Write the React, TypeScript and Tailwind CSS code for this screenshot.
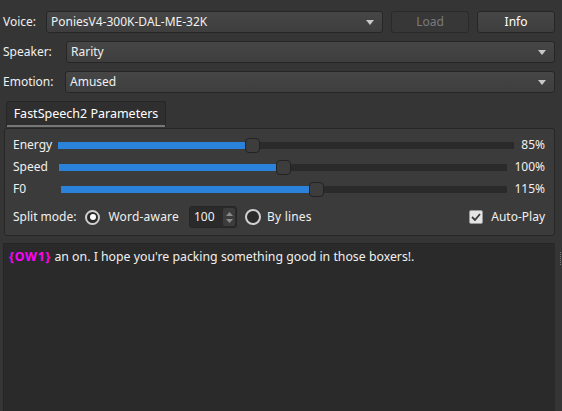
import React from 'react'

const font = { fontFamily: '"Noto Sans", "Open Sans", sans-serif' }

function Arrow() {
  return (
    <svg width="8" height="5" viewBox="0 0 8 5" className="shrink-0">
      <path d="M0 0 L8 0 L4 5 Z" fill="#c8c8c8" />
    </svg>
  )
}

function Combo({ value }: { value: string }) {
  return (
    <div className="flex-1 h-[22px] flex items-center justify-between pl-[4px] pr-[8px] rounded-[3px] border border-[#262626] bg-gradient-to-b from-[#464646] to-[#3e3e3e] text-[#f0f0f0]">
      <span>{value}</span>
      <Arrow />
    </div>
  )
}

function Slider({ label, handle, value, labelW, right }: { label: string; handle: number; value: string; labelW: number; right: number }) {
  return (
    <div className="flex items-center h-[22px]">
      <span className="shrink-0" style={{ width: labelW }}>{label}</span>
      <div className="relative h-[15px] flex items-center" style={{ width: right }}>
        <div className="w-full h-[7px] bg-[#2a2a2a] rounded-[1px]" />
        <div className="absolute left-0 h-[7px] bg-[#2a82da]" style={{ width: handle + 2 }} />
        <div
          className="absolute top-0 w-[15px] h-[15px] rounded-[4px] border border-[#222] bg-[#3d3d3d]"
          style={{ left: handle }}
        />
      </div>
      <span className="flex-1 text-right">{value}</span>
    </div>
  )
}

export default function App() {
  return (
    <div className="w-[562px] h-[411px] bg-[#353535] text-[12px] text-[#f0f0f0] overflow-hidden relative" style={font}>
      <div className="flex flex-col pr-[7px]">
        <div className="flex items-center mt-[11px] gap-[8px]">
          <span className="pl-[3px] w-[38px] shrink-0">Voice:</span>
          <Combo value="PoniesV4-300K-DAL-ME-32K" />
          <button className="w-[78px] h-[22px] rounded-[3px] border border-[#2a2a2a] bg-[#373737] text-[#7b7b7b]">Load</button>
          <button className="w-[78px] h-[22px] rounded-[3px] border border-[#262626] bg-gradient-to-b from-[#464646] to-[#3e3e3e] text-white">Info</button>
        </div>
        <div className="flex items-center mt-[8px]">
          <span className="pl-[3px] w-[66px] shrink-0">Speaker:</span>
          <Combo value="Rarity" />
        </div>
        <div className="flex items-center mt-[8px]">
          <span className="pl-[3px] w-[65px] shrink-0">Emotion:</span>
          <Combo value="Amused" />
        </div>

        <div className="ml-[6px] mt-[8px] w-[160px] h-[26px] flex items-center justify-center rounded-t-[3px] border border-[#262626] border-b-0 bg-[#2f2f2f] relative text-[12.5px] text-white">
          FastSpeech2 Parameters
          <div className="absolute bottom-0 left-0 right-0 h-[2px] bg-[#777]" />
        </div>
        <div className="ml-[4px] mt-[1px] h-[108px] rounded-[3px] border border-[#262626] bg-[#3b3b3b] pl-[8px] pr-[9px] pt-[5px]">
          <Slider label="Energy" handle={187} value="85%" labelW={45} right={456} />
          <Slider label="Speed" handle={217} value="100%" labelW={46} right={448} />
          <Slider label="F0" handle={248} value="115%" labelW={48} right={446} />
          <div className="flex items-center h-[22px] mt-[6px]">
            <span>Split mode:</span>
            <div className="ml-[9px] w-[15px] h-[15px] rounded-full border-2 border-[#d0d0d0] bg-[#2a2a2a] flex items-center justify-center">
              <div className="w-[6px] h-[6px] rounded-full bg-white" />
            </div>
            <span className="ml-[8px] tracking-[0.2px]">Word-aware</span>
            <div className="ml-[10px] w-[48px] h-[22px] rounded-[3px] border border-[#262626] bg-[#2a2a2a] flex items-center">
              <span className="pl-[4px] flex-1">100</span>
              <div className="w-[12px] h-[18px] mr-[1px] bg-[#3c3c3c] rounded-[2px] flex flex-col items-center justify-center gap-[3px]">
                <svg width="7" height="4" viewBox="0 0 7 4"><path d="M0 4 L7 4 L3.5 0 Z" fill="#8a8a8a" /></svg>
                <svg width="7" height="4" viewBox="0 0 7 4"><path d="M0 0 L7 0 L3.5 4 Z" fill="#8a8a8a" /></svg>
              </div>
            </div>
            <div className="ml-[8px] w-[16px] h-[16px] rounded-full border-2 border-[#d0d0d0] bg-[#2a2a2a]" />
            <span className="ml-[6px] tracking-[0.2px]">By lines</span>
            <div className="ml-auto w-[14px] h-[14px] rounded-[2px] bg-[#e4e4e4] border border-[#999] flex items-center justify-center">
              <svg width="10" height="8" viewBox="0 0 10 8"><path d="M1 4 L4 7 L9 1" stroke="#3a3a3a" strokeWidth="1.8" fill="none" /></svg>
            </div>
            <span className="ml-[8px]">Auto-Play</span>
          </div>
        </div>

        <div className="ml-[3px] mt-[7px] h-[180px] bg-[#2a2a2a] border-t border-l border-[#262626] pl-[5px] pt-[4px] text-[12.3px]">
          <span className="text-[#ff00ff] font-bold tracking-[0.8px]">{'{OW1}'}</span> an on. I hope you're packing something good in those boxers!.
        </div>
      </div>
      <div className="absolute right-[1px] top-[252px] w-[1px] h-[14px] bg-[repeating-linear-gradient(to_bottom,#777_0,#777_1px,transparent_1px,transparent_2px)]" />
    </div>
  )
}
